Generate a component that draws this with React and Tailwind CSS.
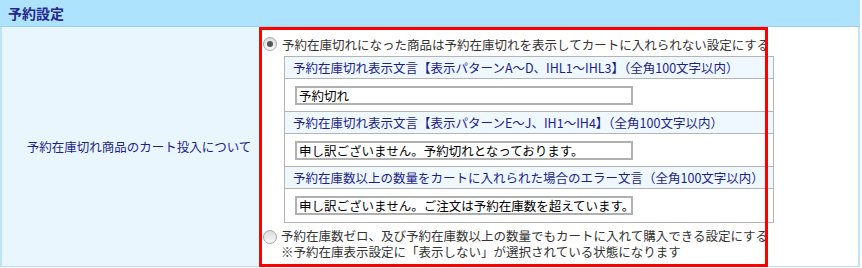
export default function App() {
  const Radio = ({ checked }) => (
    <span className="relative inline-flex w-[14px] h-[14px] shrink-0 rounded-full border border-[#a9a9a9] bg-[linear-gradient(#dcdcdc,#f8f8f8)] items-center justify-center">
      {checked && <span className="w-[6px] h-[6px] rounded-full bg-[#555]" />}
    </span>
  );
  const Head = ({ children }) => (
    <div className="h-[22px] flex items-center px-[8px] border-b border-[#b4b4b4] bg-[#eef8fe] text-[#1e1e8c] whitespace-nowrap">
      {children}
    </div>
  );
  const Input = ({ value, last }) => (
    <div className={"h-[33px] flex items-center px-[10px] bg-white " + (last ? "" : "border-b border-[#b4b4b4]")}>
      <div className="w-[338px] h-[19px] border-2 border-[#b0b0b0] bg-white pl-[2px] flex items-center text-black whitespace-nowrap">
        {value}
      </div>
    </div>
  );
  return (
    <div className="relative w-[862px] h-[268px] bg-white font-['Noto_Sans_CJK_JP',sans-serif] text-[12.5px] leading-[15px]">
      <div className="w-[860px] h-[27px] bg-[#ade3fd] border-b border-[#96d2ee] flex items-center px-[8px] text-[14px] font-bold text-[#26268e]">
        予約設定
      </div>
      <div className="flex w-[860px] h-[240px] border-b border-[#b8e0f2]">
        <div className="w-[258px] bg-[#eaf6fd] border-l-2 border-[#bfe4f5] flex items-center justify-center pl-[18px] text-[#1e1e8c] whitespace-nowrap">
          予約在庫切れ商品のカート投入について
        </div>
        <div className="flex-1 border-r-2 border-[#bfe4f5] pl-[5px] pt-[9px] text-[#333]">
          <div className="flex items-center h-[16px] whitespace-nowrap">
            <Radio checked />
            <span className="ml-[5px]">予約在庫切れになった商品は予約在庫切れを表示してカートに入れられない設定にする</span>
          </div>
          <div className="ml-[21px] mt-[4px] w-[490px] border border-[#b4b4b4]">
            <Head>予約在庫切れ表示文言【表示パターンA～D、IHL1～IHL3】（全角100文字以内）</Head>
            <Input value="予約切れ" />
            <Head>予約在庫切れ表示文言【表示パターンE～J、IH1～IH4】（全角100文字以内）</Head>
            <Input value="申し訳ございません。予約切れとなっております。" />
            <Head>予約在庫数以上の数量をカートに入れられた場合のエラー文言（全角100文字以内）</Head>
            <Input value="申し訳ございません。ご注文は予約在庫数を超えています。" last />
          </div>
          <div className="flex items-start mt-[5px]">
            <span className="mt-[2px]"><Radio /></span>
            <div className="ml-[4px] whitespace-nowrap leading-[16px]">
              <div>予約在庫数ゼロ、及び予約在庫数以上の数量でもカートに入れて購入できる設定にする</div>
              <div>※予約在庫表示設定に「表示しない」が選択されている状態になります</div>
            </div>
          </div>
        </div>
      </div>
      <div className="absolute left-[259px] top-[27px] w-[509px] h-[240px] border-[3px] border-[#ff0000]" />
    </div>
  );
}
